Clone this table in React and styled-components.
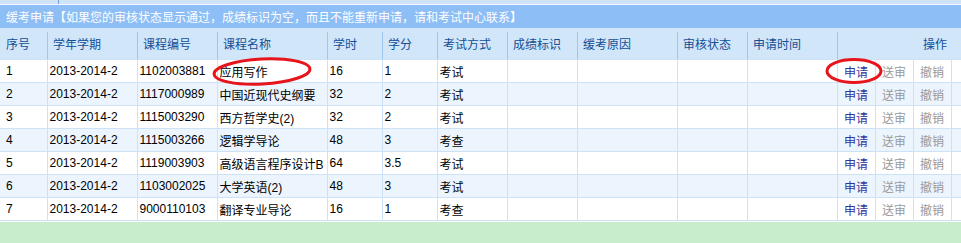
import React from "react";
import styled, { createGlobalStyle } from "styled-components";

const Global = createGlobalStyle`
  html, body { margin: 0; padding: 0; background: #fff; }
  body { font-family: "Liberation Sans", "Noto Sans CJK SC", sans-serif; font-size: 12px; }
`;

const Page = styled.div`
  position: relative;
  width: 961px;
  height: 243px;
  overflow: hidden;
  display: flex;
  flex-direction: column;
  background: #fff;
`;

const TopStrip = styled.div`
  height: 4px;
  display: flex;
  background: #cfe3f9;
  border-bottom: 1px solid #f4f9ff;
`;

const TopSegment = styled.div`
  width: 58px;
  border-right: 1px solid #6f9fd6;
`;

const TitleBar = styled.div`
  height: 23px;
  display: flex;
  align-items: center;
  padding-left: 6px;
  background: #8dbef6;
  color: #fff;
  font-size: 12px;
  white-space: nowrap;
`;

const Table = styled.table`
  width: 961px;
  table-layout: fixed;
  border-collapse: collapse;
`;

const HeadCell = styled.th`
  position: relative;
  height: 31px;
  padding: 0 ${(p) => (p.$right ? "14px" : "0")} 0 6px;
  background: #d2e6fa;
  color: #114f96;
  font-weight: normal;
  font-size: 12px;
  text-align: ${(p) => (p.$right ? "right" : "left")};
  white-space: nowrap;
  &::before {
    content: "";
    display: ${(p) => (p.$first ? "none" : "block")};
    position: absolute;
    left: 0;
    top: 4px;
    bottom: 0;
    width: 1px;
    background: #9cc6ef;
  }
`;

const Row = styled.tr`
  background: ${(p) => (p.$even ? "#ecf5fe" : "#ffffff")};
`;

const Cell = styled.td`
  height: 22px;
  padding: 0 0 0 ${(p) => (p.$first ? "6px" : "2px")};
  border: 1px solid #cde1f7;
  border-left: ${(p) => (p.$first ? "none" : "1px solid #cde1f7")};
  color: #000;
  font-size: 12px;
  white-space: nowrap;
  overflow: hidden;
`;

const OpCell = styled.td`
  height: 22px;
  padding: 0;
  border: 1px solid #cde1f7;
  text-align: center;
  font-size: 12px;
  white-space: nowrap;
  color: ${(p) => (p.$active ? "#333399" : "#999999")};
`;

const Footer = styled.div`
  flex: 1;
  margin-top: 1px;
  background: #c8edcc;
`;

const Mark = styled.svg`
  position: absolute;
  left: 0;
  top: 0;
  pointer-events: none;
`;

const widths = [47, 90, 80, 110, 55, 55, 70, 70, 100, 70, 90, 38, 38, 38, 10];
const heads = ["序号", "学年学期", "课程编号", "课程名称", "学时", "学分", "考试方式", "成绩标识", "缓考原因", "审核状态", "申请时间"];

const rows = [
  ["1", "2013-2014-2", "1102003881", "应用写作", "16", "1", "考试"],
  ["2", "2013-2014-2", "1117000989", "中国近现代史纲要", "32", "2", "考试"],
  ["3", "2013-2014-2", "1115003290", "西方哲学史(2)", "32", "2", "考试"],
  ["4", "2013-2014-2", "1115003266", "逻辑学导论", "48", "3", "考查"],
  ["5", "2013-2014-2", "1119003903", "高级语言程序设计B", "64", "3.5", "考试"],
  ["6", "2013-2014-2", "1103002025", "大学英语(2)", "48", "3", "考试"],
  ["7", "2013-2014-2", "9000110103", "翻译专业导论", "16", "1", "考查"],
];

export default function App() {
  return (
    <>
      <Global />
      <Page>
        <TopStrip>
          <TopSegment />
        </TopStrip>
        <TitleBar>缓考申请【如果您的审核状态显示通过，成绩标识为空，而且不能重新申请，请和考试中心联系】</TitleBar>
        <Table>
          <colgroup>
            {widths.map((w, i) => (
              <col key={i} style={{ width: w }} />
            ))}
          </colgroup>
          <thead>
            <tr>
              {heads.map((h, i) => (
                <HeadCell key={h} $first={i === 0}>{h}</HeadCell>
              ))}
              <HeadCell colSpan={4} $right>操作</HeadCell>
            </tr>
          </thead>
          <tbody>
            {rows.map((r, ri) => (
              <Row key={r[0]} $even={ri % 2 === 1}>
                {r.map((v, ci) => (
                  <Cell key={ci} $first={ci === 0}>{v}</Cell>
                ))}
                <Cell />
                <Cell />
                <Cell />
                <Cell />
                <OpCell $active>申请</OpCell>
                <OpCell>送审</OpCell>
                <OpCell>撤销</OpCell>
                <Cell />
              </Row>
            ))}
          </tbody>
        </Table>
        <Footer />
        <Mark width="961" height="243" viewBox="0 0 961 243">
          <ellipse cx="262" cy="71.5" rx="48" ry="12.5" fill="none" stroke="#e8141b" strokeWidth="3" transform="rotate(-3 262 71.5)" />
          <ellipse cx="854" cy="71" rx="27" ry="11.5" fill="none" stroke="#e8141b" strokeWidth="3" />
        </Mark>
      </Page>
    </>
  );
}
